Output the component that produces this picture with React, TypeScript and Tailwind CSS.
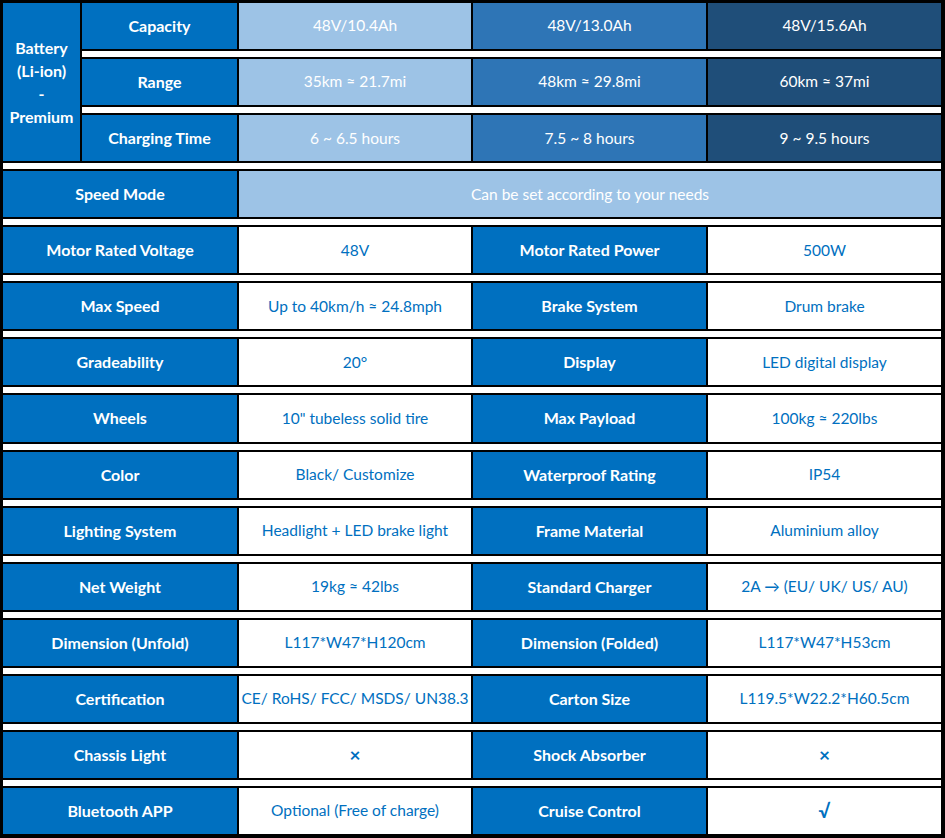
import React from "react"

const BLUE = "bg-[#0070C0]"

type Quad = [string, string, string, string]

const specRows: Quad[] = [
  ["Motor Rated Voltage", "48V", "Motor Rated Power", "500W"],
  ["Max Speed", "Up to 40km/h ≈ 24.8mph", "Brake System", "Drum brake"],
  ["Gradeability", "20°", "Display", "LED digital display"],
  ["Wheels", "10\" tubeless solid tire", "Max Payload", "100kg ≈ 220lbs"],
  ["Color", "Black/ Customize", "Waterproof Rating", "IP54"],
  ["Lighting System", "Headlight + LED brake light", "Frame Material", "Aluminium alloy"],
  ["Net Weight", "19kg ≈ 42lbs", "Standard Charger", "2A → (EU/ UK/ US/ AU)"],
  ["Dimension (Unfold)", "L117*W47*H120cm", "Dimension (Folded)", "L117*W47*H53cm"],
  ["Certification", "CE/ RoHS/ FCC/ MSDS/ UN38.3", "Carton Size", "L119.5*W22.2*H60.5cm"],
  ["Chassis Light", "×", "Shock Absorber", "×"],
  ["Bluetooth APP", "Optional (Free of charge)", "Cruise Control", "√"],
]

const batteryRows: Quad[] = [
  ["Capacity", "48V/10.4Ah", "48V/13.0Ah", "48V/15.6Ah"],
  ["Range", "35km ≈ 21.7mi", "48km ≈ 29.8mi", "60km ≈ 37mi"],
  ["Charging Time", "6 ~ 6.5 hours", "7.5 ~ 8 hours", "9 ~ 9.5 hours"],
]

function Sep({ full = true }: { full?: boolean }) {
  return (
    <div
      className={`${full ? "col-span-5" : "col-start-2 col-span-4"} border-y-2 border-black bg-white`}
    />
  )
}

function Label({ children, wide = false }: { children: React.ReactNode; wide?: boolean }) {
  return (
    <div
      className={`${BLUE} ${wide ? "col-span-2" : ""} flex items-center justify-center font-bold text-white text-[16px] whitespace-nowrap`}
    >
      {children}
    </div>
  )
}

function Value({ children }: { children: string }) {
  const mark = children === "×" || children === "√"
  return (
    <div
      className={`flex items-center justify-center bg-white text-[#0070C0] whitespace-nowrap ${mark ? "text-[19px] font-bold" : "text-[15.5px]"}`}
    >
      {children}
    </div>
  )
}

export default function App() {
  return (
    <div
      className="w-[945px] h-[838px] border-t-[3px] border-l-[3px] border-r-4 border-b-4 border-black bg-black grid grid-cols-[77px_155px_232px_233px_1fr] grid-rows-[repeat(14,1fr_10px)_1fr] gap-x-[2px]"
      style={{ fontFamily: "Lato, 'Open Sans', sans-serif" }}
    >
      {/* Battery block, spans the three battery rows */}
      <div className={`${BLUE} row-span-5 flex items-center justify-center text-center font-bold text-white text-[16px] leading-[23px]`}>
        <div>
          Battery
          <br />
          (Li-ion)
          <br />-<br />
          Premium
        </div>
      </div>
      {batteryRows.map((r, i) => (
        <React.Fragment key={r[0]}>
          {i > 0 && <Sep full={false} />}
          <Label>{r[0]}</Label>
          <div className="bg-[#9DC3E6] flex items-center justify-center text-white text-[15.5px]">{r[1]}</div>
          <div className="bg-[#2E75B6] flex items-center justify-center text-white text-[15.5px]">{r[2]}</div>
          <div className="bg-[#1F4E79] flex items-center justify-center text-white text-[15.5px]">{r[3]}</div>
        </React.Fragment>
      ))}
      <Sep />
      {/* Speed mode */}
      <Label wide>Speed Mode</Label>
      <div className="col-span-3 bg-[#9DC3E6] flex items-center justify-center text-white text-[15.5px]">
        Can be set according to your needs
      </div>
      {specRows.map((r) => (
        <React.Fragment key={r[0]}>
          <Sep />
          <Label wide>{r[0]}</Label>
          <Value>{r[1]}</Value>
          <Label>{r[2]}</Label>
          <Value>{r[3]}</Value>
        </React.Fragment>
      ))}
    </div>
  )
}
